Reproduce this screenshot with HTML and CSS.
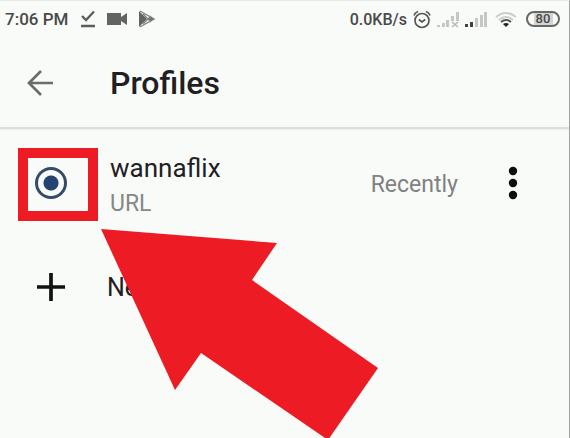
FILE: index.html
```html
<!DOCTYPE html>
<html lang="en">
<head>
<meta charset="utf-8">
<title>Profiles</title>
<link rel="stylesheet" href="styles.css">
</head>
<body>
<div class="screen">
  <div class="status">
    <div class="status-group status-left">
      <span class="clock">7:06 PM</span>
      <svg width="16" height="18" viewBox="0 0 16 18" fill="none" stroke="#5c5d5c" stroke-width="2.300"><path d="M2 6l4 4L14 1.500M1 16h14"/></svg>
      <svg width="22" height="14" viewBox="0 0 22 14" fill="#626362"><path d="M1 1h14v4l6-4v12l-6-4v4H1z"/></svg>
      <svg width="17" height="18" viewBox="0 0 17 18"><path d="M1 1v16l8-8z" fill="#626362"/><path d="M2 1l14 8-14 8M5 4l8 8M5 14l8-8" fill="none" stroke="#858685" stroke-width="1.300"/><path d="M10 9l3-2 3 2-3 2z" fill="#717271"/></svg>
    </div>
    <div class="status-group status-right">
      <span class="speed">0.0KB/s</span>
      <svg width="18" height="19" viewBox="0 0 18 19" fill="none" stroke="#555655" stroke-width="1.700"><circle cx="9" cy="10.500" r="7"/><path d="M5.800 9.500L9 12l3.200-2.500M1 5.500Q2 2.500 5 1.500M17 5.500Q16 2.500 13 1.500"/></svg>
      <svg width="22" height="17" viewBox="0 0 22 17" fill="#c5c6c5"><path d="M0 14h3v2H0zM5 12h3v4H5zM9 9h3v7H9zM14 5h3v5h-3zM19 1h3v9h-3z"/><path d="M15 11l6 5M21 11l-6 5" stroke="#b5b6b5" stroke-width="1.500"/></svg>
      <svg width="22" height="17" viewBox="0 0 22 17"><path d="M0 13h3v3H0zM5 11h3v5H5z" fill="#404140"/><path d="M10 7h3v9h-3zM15 4h3v12h-3zM19 1h3v15h-3z" fill="#c5c6c5"/></svg>
      <svg class="wifi" width="22" height="17" viewBox="0 0 22 17" fill="none" stroke-width="2"><path d="M1 6q10-8 20 0M4 9q7-6 14 0" stroke="#ccc"/><path d="M6 11q5-4 10 0" stroke="#555"/><path d="M8 13q3-2 6 0l-3 3z" fill="#222"/></svg>
      <span class="battery">80</span>
    </div>
  </div>
  <header class="bar">
    <button class="icon-button" aria-label="Back">
      <svg width="28" height="28" viewBox="0 0 28 28" fill="none" stroke="#6b6c6b" stroke-width="2.700"><path d="M15 2L3 14l12 12M3 14h24"/></svg>
    </button>
    <h1>Profiles</h1>
  </header>
  <main class="list">
    <div class="row profile">
      <div class="lead">
        <input type="radio" id="wannaflix" name="profile" checked>
        <span class="highlight"></span>
      </div>
      <label class="names" for="wannaflix">
        <span class="name">wannaflix</span>
        <span class="kind">URL</span>
      </label>
      <span class="when">Recently</span>
      <button class="icon-button" aria-label="More options">
        <svg width="10" height="34" viewBox="0 0 10 34" fill="#0b0c0b"><circle cx="5" cy="5" r="4.200"/><circle cx="5" cy="17" r="4.200"/><circle cx="5" cy="29" r="4.200"/></svg>
      </button>
    </div>
    <button class="row new">
      <span class="lead"><svg width="30" height="30" viewBox="0 0 30 30" fill="none" stroke="#111211" stroke-width="3.700"><path d="M15 1v28M1 15h28"/></svg></span>
      <span class="new-name">New</span>
    </button>
    <svg class="pointer" width="279" height="211" viewBox="0 0 279 211"><path d="M0 0L176 14 151 51 277 139 227 211 100 124 74 161z" fill="#ed1c24"/></svg>
  </main>
</div>
</body>
</html>
```
FILE: styles.css
```css
* {
  box-sizing: border-box;
}

body {
  margin: 0;
  background: #f9fbf9;
  color: #1f201f;
  font-family: Roboto, "Liberation Sans", sans-serif;
}

button {
  margin: 0;
  padding: 0;
  border: 0;
  background: none;
  color: inherit;
  font: inherit;
  text-align: left;
}

svg {
  display: block;
  flex: none;
}

.screen {
  min-height: 100vh;
  border-top: 1px solid #e6e8e6;
  border-right: 1px solid #a0a1a0;
  overflow: hidden;
}

.status {
  display: flex;
  justify-content: space-between;
  align-items: center;
  height: 36px;
  padding: 0 9px 0 5px;
  color: #484948;
  font-weight: 500;
}

.status-group {
  display: flex;
  align-items: center;
}

.status-left {
  gap: 10px;
}

.status-right {
  gap: 6px;
}

.clock {
  margin-right: 2px;
  font-size: 17px;
}

.speed {
  font-size: 16px;
}

.wifi {
  margin: 0 3px 0 2px;
}

.battery {
  width: 34px;
  border: 2px solid #666766;
  border-radius: 8px;
  background: linear-gradient(90deg, #f9fbf9 20%, #d2d4d2 20%, #d2d4d2 85%, #f9fbf9 85%);
  font-size: 13px;
  line-height: 12px;
  text-align: center;
}

.bar {
  display: flex;
  align-items: center;
  gap: 56px;
  height: 92px;
  padding: 2px 26px 0;
  border-bottom: 2px solid #dcdedc;
  box-shadow: 0 1px 2px #eceeec;
}

h1 {
  margin: 0;
  font-size: 32px;
  font-weight: 500;
  line-height: 40px;
}

.list {
  position: relative;
}

.row {
  display: flex;
  align-items: center;
  width: 100%;
}

.profile {
  height: 108px;
  padding-right: 51px;
}

.lead {
  position: relative;
  display: flex;
  justify-content: center;
  flex: none;
  width: 102px;
}

.names {
  display: flex;
  flex: 1;
  flex-direction: column;
  padding: 6px 0 0 8px;
}

.name {
  font-size: 26px;
  line-height: 36px;
}

.kind {
  color: #868786;
  font-size: 23px;
  line-height: 36px;
}

.when {
  margin-right: 50px;
  padding-top: 2px;
  color: #808180;
  font-size: 23px;
}

input[type="radio"] {
  appearance: none;
  width: 32px;
  height: 32px;
  margin: 0;
  border: 3px solid #354b69;
  border-radius: 50%;
  background: radial-gradient(circle, #254370 7px, transparent 8px);
}

.highlight {
  position: absolute;
  top: -19px;
  left: 18px;
  width: 80px;
  height: 73px;
  border: 10px solid #ed1c24;
  pointer-events: none;
}

.new {
  height: 100px;
}

.new-name {
  padding-left: 5px;
  font-size: 25px;
}

.pointer {
  position: absolute;
  top: 100px;
  left: 101px;
  pointer-events: none;
}
```
